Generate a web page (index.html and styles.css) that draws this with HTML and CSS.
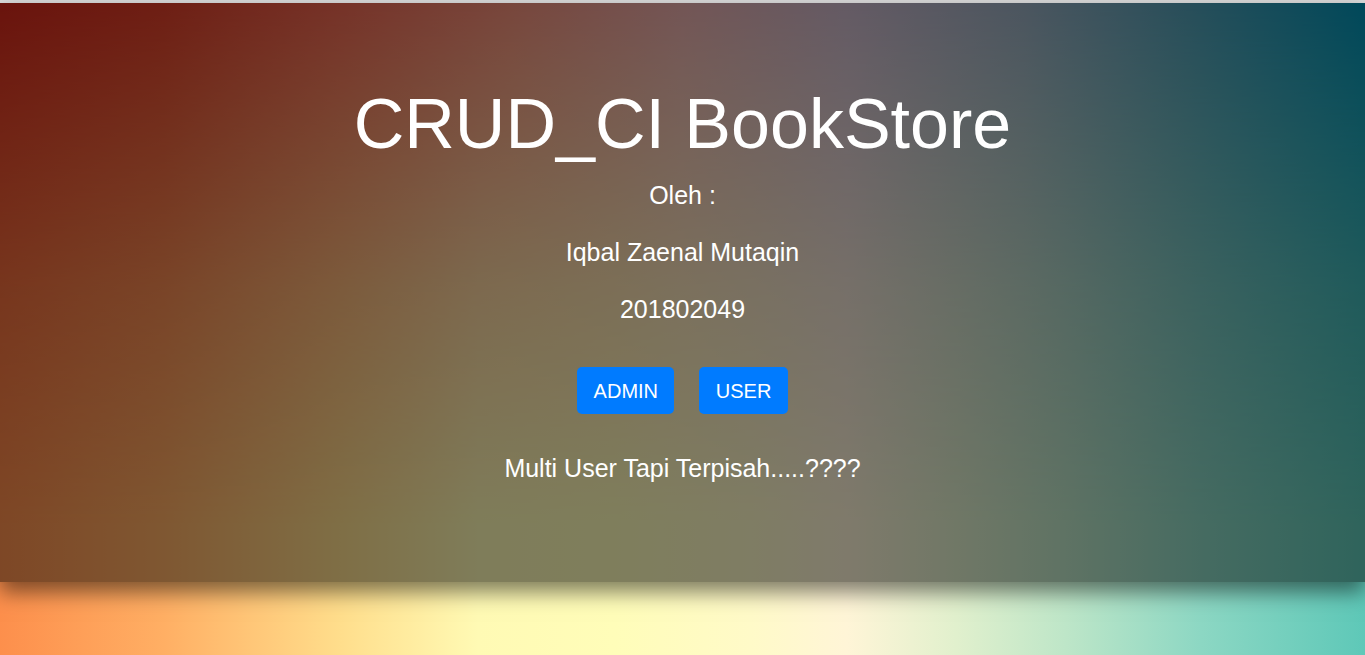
FILE: index.html
```html
<!DOCTYPE html>
<html lang="id">
<head>
<meta charset="utf-8">
<title>CRUD_CI BookStore</title>
<link rel="stylesheet" href="styles.css">
</head>
<body>
<div class="page">
  <div class="topline"></div>
  <header class="hero">
    <h1 class="hero-title">CRUD_CI BookStore</h1>
    <p class="hero-text">Oleh :</p>
    <p class="hero-text">Iqbal Zaenal Mutaqin</p>
    <p class="hero-text">201802049</p>
    <div class="actions">
      <a class="btn" href="#">ADMIN</a>
      <a class="btn" href="#">USER</a>
    </div>
    <p class="hero-text tagline">Multi User Tapi Terpisah.....????</p>
  </header>
</div>
</body>
</html>
```

FILE: styles.css
```css
html, body {
  margin: 0;
  padding: 0;
}

body {
  font-family: "Liberation Sans", Arial, sans-serif;
  color: #fff;
}

.page {
  position: relative;
  min-height: 100vh;
  overflow: hidden;
  background: linear-gradient(to right,
    #fd8f4c 0%, #ffaf64 12%, #ffde8c 25%, #fffab4 35%, #fffdb9 45%,
    #fffac8 55%, #fff5d7 62%, #e1f0cd 70%, #bee6c8 78%, #8cd7c3 88%, #5ec8b8 100%);
}

.page::before {
  content: "";
  position: absolute;
  inset: 0;
  background: linear-gradient(to right,
    #d4261a 0%, #dc3c28 12%, #ec6450 25%, #f08c78 37.5%, #e6aaaa 50%,
    #c8b4c8 62%, #96aabe 75%, #509cb4 87%, #0090b4 100%);
  -webkit-mask-image: linear-gradient(to bottom, #000 0%, rgba(0,0,0,.66) 22%, rgba(0,0,0,.33) 44%, rgba(0,0,0,0) 80%);
  mask-image: linear-gradient(to bottom, #000 0%, rgba(0,0,0,.66) 22%, rgba(0,0,0,.33) 44%, rgba(0,0,0,0) 80%);
}

.topline {
  position: relative;
  z-index: 1;
  height: 3px;
  background: #dcdcdc;
}

.hero {
  position: relative;
  z-index: 1;
  display: flex;
  flex-direction: column;
  align-items: center;
  padding: 79px 0 95px;
  background: rgba(0, 0, 0, 0.5);
  box-shadow: 0 10px 20px rgba(0, 0, 0, 0.5);
  text-align: center;
}

.hero-title {
  margin: 0 0 10px;
  font-size: 70px;
  font-weight: 400;
  line-height: 84px;
}

.hero-text {
  margin: 0;
  font-size: 25px;
  line-height: 38px;
}

.hero-text + .hero-text {
  margin-top: 19px;
}

.actions {
  display: flex;
  justify-content: center;
  gap: 25px;
  margin-top: 39px;
}

.btn {
  display: inline-block;
  padding: 8.5px 16.4px;
  font-size: 20px;
  line-height: 30px;
  color: #fff;
  text-decoration: none;
  background: #007bff;
  border-radius: 5px;
}

.tagline {
  margin-top: 35px;
}
```
